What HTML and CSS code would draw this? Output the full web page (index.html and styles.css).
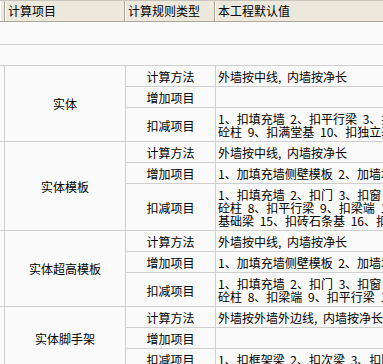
FILE: index.html
```html
<!DOCTYPE html>
<html>
<head>
<meta charset="utf-8">
<link rel="stylesheet" href="styles.css">
</head>
<body>
<div class="viewport">
<div class="sheet">
  <div class="head">
    <div class="hc hc-stub"></div>
    <div class="hc">计算项目</div>
    <div class="hc">计算规则类型</div>
    <div class="hc">本工程默认值</div>
  </div>
  <div class="band band-a"></div>
  <div class="band band-b"></div>
  <div class="grid">
    <div class="stub span3"></div>
    <div class="group span3">实体</div>
    <div class="kind">计算方法</div>
    <div class="val">外墙按中线, 内墙按净长</div>
    <div class="kind">增加项目</div>
    <div class="val"></div>
    <div class="kind">扣减项目</div>
    <div class="val">1、扣填充墙 2、扣平行梁 3、扣次梁 4、扣框架梁 5、扣圈梁 6、扣过梁 7、扣构造柱 8、扣<br>砼柱 9、扣满堂基 10、扣独立基础 11、扣条形基础 12、扣桩承台</div>

    <div class="stub span3"></div>
    <div class="group span3">实体模板</div>
    <div class="kind">计算方法</div>
    <div class="val">外墙按中线, 内墙按净长</div>
    <div class="kind">增加项目</div>
    <div class="val">1、加填充墙侧壁模板 2、加墙垛侧壁模板</div>
    <div class="kind">扣减项目</div>
    <div class="val">1、扣填充墙 2、扣门 3、扣窗 4、扣洞口 5、扣过梁 6、扣圈梁 7、扣<br>砼柱 8、扣平行梁 9、扣梁端 10、扣次梁 11、扣框架梁 12、扣<br>基础梁 15、扣砖石条基 16、扣独立基础</div>

    <div class="stub span3"></div>
    <div class="group span3">实体超高模板</div>
    <div class="kind">计算方法</div>
    <div class="val">外墙按中线, 内墙按净长</div>
    <div class="kind">增加项目</div>
    <div class="val">1、加填充墙侧壁模板 2、加墙垛侧壁模板</div>
    <div class="kind">扣减项目</div>
    <div class="val">1、扣填充墙 2、扣门 3、扣窗 4、扣洞口 5、扣过梁 6、扣圈梁 7、扣<br>砼柱 8、扣梁端 9、扣平行梁 10、扣次梁 11、扣框架梁</div>

    <div class="stub span3"></div>
    <div class="group span3">实体脚手架</div>
    <div class="kind">计算方法</div>
    <div class="val">外墙按外墙外边线, 内墙按净长线</div>
    <div class="kind">增加项目</div>
    <div class="val"></div>
    <div class="kind">扣减项目</div>
    <div class="val">1、扣框架梁 2、扣次梁 3、扣圈梁 4、扣过梁</div>
  </div>
</div>
</div>
</body>
</html>
```

FILE: styles.css
```css
html, body {
  margin: 0;
  padding: 0;
  overflow: hidden;
  background: #fafafa;
}

.viewport {
  width: 100vw;
  height: 100vh;
  overflow: hidden;
}

.sheet {
  width: 620px;
  font-family: "Noto Sans CJK SC", "Noto Sans", sans-serif;
  font-size: 12px;
  color: #000;
}

.head {
  display: grid;
  grid-template-columns: 5px 120px 90px 405px;
  height: 22px;
  box-sizing: border-box;
  border-top: 1px solid #c8c6bc;
  border-bottom: 1px solid #aca899;
  background: #ece9dc;
}

.hc {
  border-right: 1px solid #aca899;
  box-shadow: inset 1px 0 #ffffff;
  padding-left: 3px;
  line-height: 20px;
  white-space: nowrap;
  overflow: hidden;
}

.hc-stub {
  padding: 0;
}

.band {
  border-bottom: 1px solid #cfcfcf;
  box-sizing: border-box;
}

.band-a { height: 23px; }
.band-b { height: 21px; }

.grid {
  display: grid;
  grid-template-columns: 5px 121px 90px 404px;
}

.grid > div {
  border-right: 1px solid #cfcfcf;
  border-bottom: 1px solid #cfcfcf;
  box-sizing: border-box;
  line-height: 13px;
  white-space: nowrap;
  overflow: hidden;
  background: #fafafa;
}

.span3 {
  grid-row: span 3;
}

.grid > .group {
  display: flex;
  align-items: center;
  justify-content: center;
}

.grid > .kind {
  display: flex;
  align-items: center;
  justify-content: center;
  padding: 4px 0 3px;
}

.grid > .val {
  display: flex;
  align-items: center;
  padding: 4px 2px 3px;
  min-height: 21px;
  word-spacing: 3px;
}
```
